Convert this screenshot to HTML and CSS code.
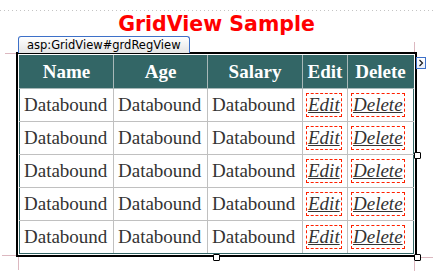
FILE: index.html
```html
<!DOCTYPE html>
<html>
<head>
<meta charset="utf-8">
<link rel="stylesheet" href="styles.css">
</head>
<body>
<div class="page">
  <div class="dots"></div>
  <h1 class="title">GridView Sample</h1>
  <div class="designer">
    <div class="tab">asp:GridView#grdRegView</div>
    <div class="ctl">
      <table class="grid">
        <colgroup>
          <col class="c-name"><col class="c-age"><col class="c-sal"><col class="c-edit"><col class="c-del">
        </colgroup>
        <thead>
          <tr><th>Name</th><th>Age</th><th>Salary</th><th>Edit</th><th>Delete</th></tr>
        </thead>
        <tbody>
          <tr><td>Databound</td><td>Databound</td><td>Databound</td><td class="lk"><span class="link">Edit</span></td><td class="lk"><span class="link">Delete</span></td></tr>
          <tr><td>Databound</td><td>Databound</td><td>Databound</td><td class="lk"><span class="link">Edit</span></td><td class="lk"><span class="link">Delete</span></td></tr>
          <tr><td>Databound</td><td>Databound</td><td>Databound</td><td class="lk"><span class="link">Edit</span></td><td class="lk"><span class="link">Delete</span></td></tr>
          <tr><td>Databound</td><td>Databound</td><td>Databound</td><td class="lk"><span class="link">Edit</span></td><td class="lk"><span class="link">Delete</span></td></tr>
          <tr><td>Databound</td><td>Databound</td><td>Databound</td><td class="lk"><span class="link">Edit</span></td><td class="lk"><span class="link">Delete</span></td></tr>
        </tbody>
      </table>
    </div>
    <div class="smarttag"><svg width="8" height="10" viewBox="0 0 8 10"><path d="M2.5 2 L5.5 5 L2.5 8" fill="none" stroke="#1a1a1a" stroke-width="1.2"/></svg></div>
    <div class="handle h-rm"></div>
    <div class="handle h-bm"></div>
    <div class="handle h-br"></div>
    <div class="guide g-tl"></div>
    <div class="guide g-tr"></div>
    <div class="guide g-blh"></div>
    <div class="guide g-blv"></div>
    <div class="guide g-brh"></div>
    <div class="guide g-brv"></div>
  </div>
</div>
</body>
</html>
```
FILE: styles.css
```css
html, body {
  margin: 0;
  padding: 0;
  background: #ffffff;
}
.page {
  width: 433px;
  height: 279px;
  overflow: hidden;
  position: relative;
}
.dots {
  margin-top: 10px;
  height: 1px;
  background: repeating-linear-gradient(to right, #c4c4c4 0 1px, transparent 1px 4px);
}
.title {
  margin: 0;
  height: 24px;
  line-height: 26px;
  text-align: center;
  font-family: "DejaVu Sans", Verdana, sans-serif;
  font-weight: bold;
  font-size: 20.5px;
  color: #ff0000;
}
.designer {
  position: relative;
  margin: 1px 0 0 16px;
  width: 401px;
}
.tab {
  position: relative;
  z-index: 2;
  margin-left: 2px;
  width: 172px;
  height: 17px;
  box-sizing: border-box;
  border: 1px solid #3d70c8;
  border-bottom: none;
  border-radius: 3px 3px 0 0;
  background: linear-gradient(#ffffff, #e4e4e4);
  font-family: "DejaVu Sans", Tahoma, sans-serif;
  font-size: 11.5px;
  line-height: 16px;
  padding-left: 8px;
  color: #000000;
  white-space: nowrap;
}
.ctl {
  margin-top: -1px;
  width: 401px;
  height: 205px;
  box-sizing: border-box;
  border: 2px solid #000000;
  padding: 1px;
  background: #ffffff;
}
.grid {
  border-collapse: collapse;
  table-layout: fixed;
  width: 394px;
  border: 1px solid #336666;
  font-family: "Liberation Serif", "Times New Roman", serif;
  font-size: 19px;
  color: #333333;
}
.c-name { width: 94px; }
.c-age { width: 94px; }
.c-sal { width: 95px; }
.c-edit { width: 45px; }
.c-del { width: 66px; }
.grid th {
  background: #336666;
  color: #ffffff;
  font-weight: bold;
  border: 1px solid #a8b8b8;
  border-top-color: #336666;
  padding: 4px 0;
  height: 24px;
  line-height: 24px;
  text-align: center;
  white-space: nowrap;
}
.grid th:first-child { border-left-color: #336666; }
.grid th:last-child { border-right-color: #336666; }
.grid td {
  border: 1px solid #c0c0c0;
  padding: 4px 0 4px 4px;
  height: 24px;
  line-height: 24px;
  white-space: nowrap;
  overflow: hidden;
}
.grid td:first-child { border-left-color: #336666; }
.grid td:last-child { border-right-color: #336666; }
.grid tr:last-child td { border-bottom-color: #336666; }
.grid td.lk {
  padding-left: 3px;
}
.link {
  display: inline-block;
  vertical-align: top;
  border: 1px dashed #ff2000;
  padding: 0 1px;
  height: 22px;
  line-height: 22px;
  font-style: italic;
  text-decoration: underline;
  color: #333333;
}
.smarttag {
  position: absolute;
  left: 400px;
  top: 21px;
  width: 10px;
  height: 12px;
  box-sizing: border-box;
  border: 1px solid #3d70c8;
  background: linear-gradient(#ffffff, #e8eef8);
  display: flex;
  align-items: center;
  justify-content: center;
}
.handle {
  position: absolute;
  width: 7px;
  height: 7px;
  box-sizing: border-box;
  border: 1px solid #000000;
  background: #ffffff;
  border-radius: 1px;
}
.h-rm { left: 398px; top: 116px; }
.h-bm { left: 197px; top: 218px; }
.h-br { left: 398px; top: 218px; }
.guide {
  position: absolute;
  background: #dcb8c0;
}
.g-tl { left: -11px; top: 17px; width: 11px; height: 1px; }
.g-tr { left: 398px; top: 6px; width: 1px; height: 10px; }
.g-blh { left: -14px; top: 219px; width: 14px; height: 1px; }
.g-blv { left: 2px; top: 221px; width: 1px; height: 13px; }
.g-brh { left: 405px; top: 221px; width: 12px; height: 1px; }
.g-brv { left: 398px; top: 225px; width: 1px; height: 10px; }
```
